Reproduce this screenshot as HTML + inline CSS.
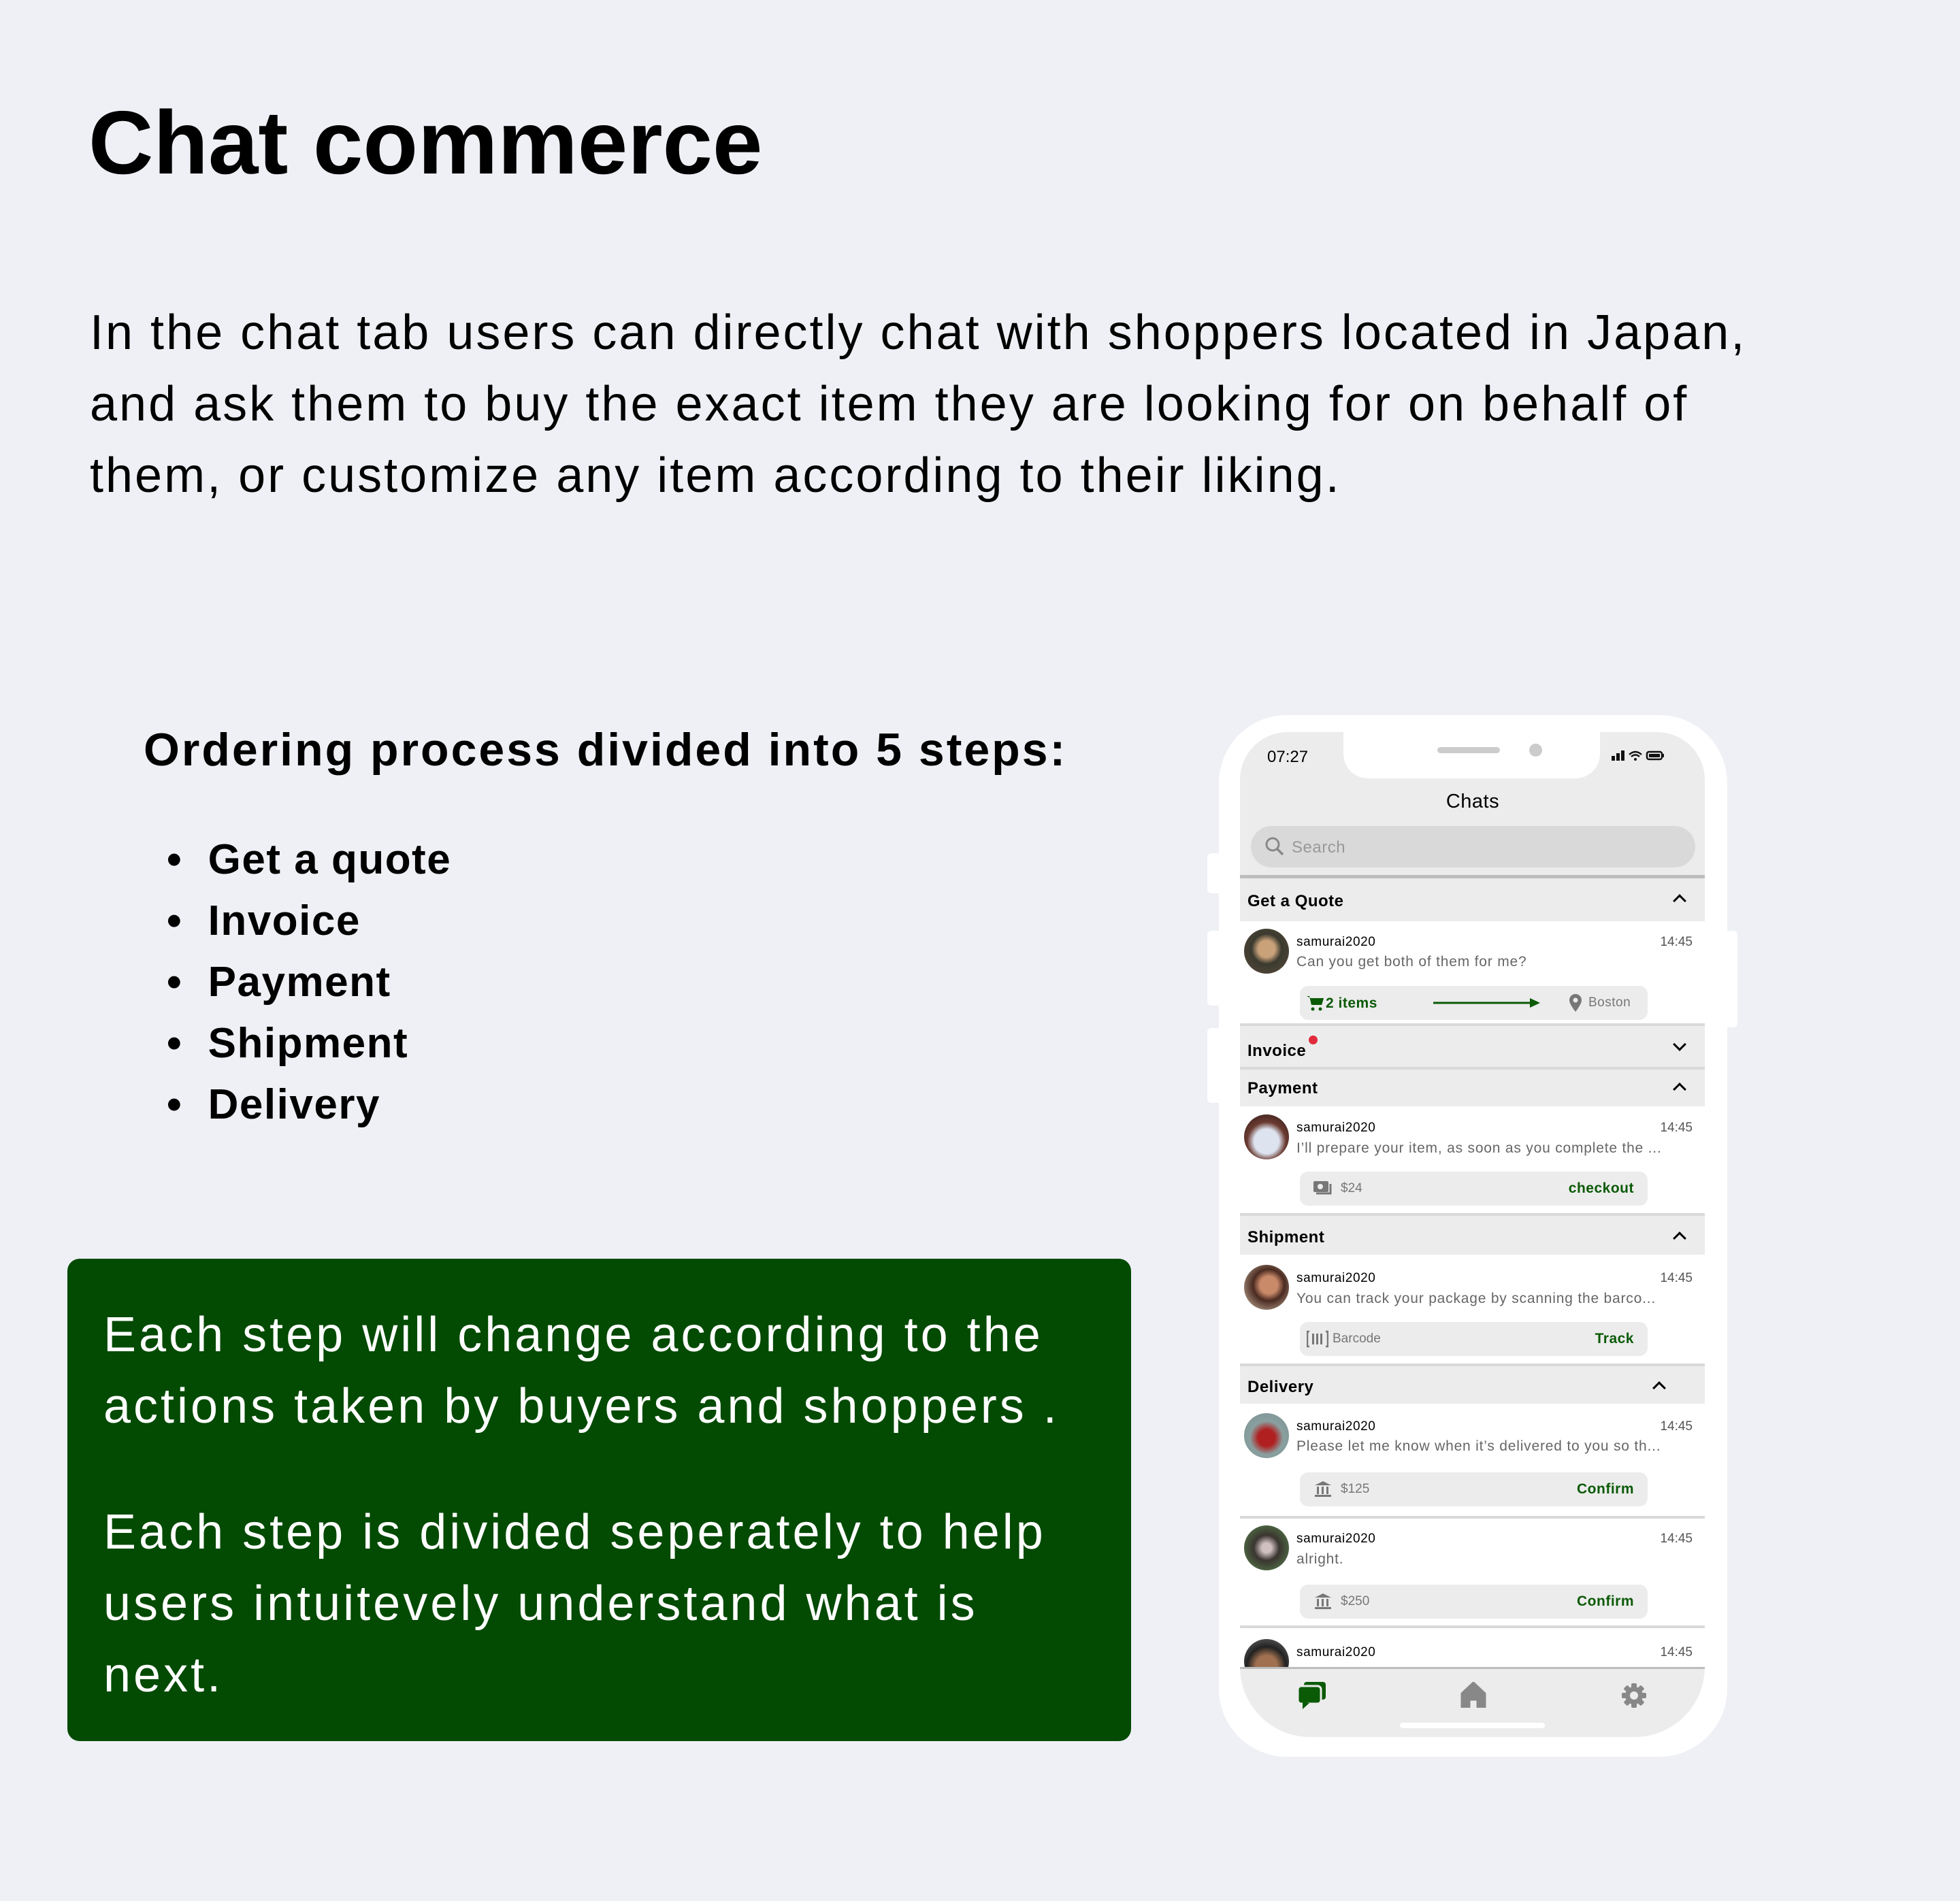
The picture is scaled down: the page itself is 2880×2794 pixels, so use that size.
<!DOCTYPE html>
<html><head><meta charset="utf-8">
<style>
*{margin:0;padding:0;box-sizing:border-box}
html,body{width:2880px;height:2794px;overflow:hidden}
body{background:#eef0f5;position:relative;font-family:"Liberation Sans",sans-serif;color:#000}
.a{position:absolute;white-space:nowrap}
.t{line-height:1}
.hdr{position:absolute;left:1822px;width:683px;background:#ececec;border-bottom:4px solid #d9d9d9}
.hdr span{position:absolute;left:11px;font-weight:bold;font-size:24px;line-height:1;letter-spacing:.5px}
.chev{position:absolute;right:30px;width:14px;height:14px;border-left:3px solid #000;border-top:3px solid #000}
.row{position:absolute;left:1822px;width:683px;background:#fff}
.av{position:absolute;width:66px;height:66px;border-radius:50%}
.nm{position:absolute;left:83px;font-size:19px;line-height:1;color:#000;letter-spacing:.6px}
.tm{position:absolute;right:18px;font-size:19px;line-height:1;color:#555}
.ms{position:absolute;left:83px;font-size:21px;line-height:1;color:#666;letter-spacing:.8px}
.pill{position:absolute;left:88px;width:511px;height:50px;background:#ececec;border-radius:12px}
.pill .l{position:absolute;left:60px;top:15px;font-size:19px;color:#777;line-height:1}
.pill .r{position:absolute;right:20px;top:14px;font-size:21px;font-weight:bold;color:#0a5a06;line-height:1;letter-spacing:.5px}
</style></head><body>

<div class="a t" style="left:130px;top:144px;font-size:132px;font-weight:bold;letter-spacing:0px">Chat commerce</div>

<div class="a t" style="left:132px;top:453px;font-size:72px;letter-spacing:3px">In the chat tab users can directly chat with shoppers located in Japan,</div>
<div class="a t" style="left:132px;top:558px;font-size:72px;letter-spacing:3px">and ask them to buy the exact item they are looking for on behalf of</div>
<div class="a t" style="left:132px;top:663px;font-size:72px;letter-spacing:3px">them, or customize any item according to their liking.</div>

<div class="a t" style="left:211px;top:1068px;font-size:68px;font-weight:bold;letter-spacing:3px">Ordering process divided into 5 steps:</div>

<div class="a t" style="left:245px;top:1219px;font-size:62px;font-weight:bold;line-height:90px;letter-spacing:1.5px">
<div>•&nbsp;&nbsp;Get a quote</div><div>•&nbsp;&nbsp;Invoice</div><div>•&nbsp;&nbsp;Payment</div><div>•&nbsp;&nbsp;Shipment</div><div>•&nbsp;&nbsp;Delivery</div>
</div>

<div class="a" style="left:99px;top:1850px;width:1563px;height:709px;background:#034a02;border-radius:18px"></div>
<div class="a t" style="left:152px;top:1910px;font-size:72px;color:#fff;line-height:105px;letter-spacing:4px">Each step will change according to the<br>actions taken by buyers and shoppers .</div>
<div class="a t" style="left:152px;top:2200px;font-size:72px;color:#fff;line-height:105px;letter-spacing:4px">Each step is divided seperately to help<br>users intuitevely understand what is<br>next.</div>

<div class="a" style="left:1774px;top:1254px;width:20px;height:59px;background:#fff;border-radius:6px"></div>
<div class="a" style="left:1774px;top:1368px;width:20px;height:110px;background:#fff;border-radius:6px"></div>
<div class="a" style="left:1774px;top:1511px;width:20px;height:110px;background:#fff;border-radius:6px"></div>
<div class="a" style="left:2535px;top:1368px;width:18px;height:142px;background:#fff;border-radius:6px"></div>
<div class="a" style="left:1791px;top:1051px;width:747px;height:1531px;background:#fff;border-radius:100px"></div>
<div class="a" style="left:1822px;top:1076px;width:683px;height:1477px;background:#ececec;border-radius:70px 70px 120px 120px;overflow:hidden"></div>
<div class="a" style="left:1974px;top:1070px;width:377px;height:74px;background:#fff;border-radius:0 0 36px 36px"></div>
<div class="a" style="left:2112px;top:1098px;width:92px;height:9px;background:#ccc;border-radius:5px"></div>
<div class="a" style="left:2247px;top:1093px;width:19px;height:19px;background:#ccc;border-radius:50%"></div>
<div class="a t" style="left:1862px;top:1101px;font-size:24px">07:27</div>
<svg class="a" style="left:2368px;top:1101px" width="80" height="20" viewBox="0 0 80 20">
<rect x="0" y="10" width="5" height="7" fill="#111"/><rect x="7" y="6" width="5" height="11" fill="#111"/><rect x="14" y="2" width="5" height="15" fill="#111"/>
<path d="M26 8 q9-8 18 0 M29 11 q6-5 12 0" stroke="#111" stroke-width="2.5" fill="none"/><circle cx="35" cy="15" r="2" fill="#111"/>
<rect x="52" y="4" width="22" height="11" rx="3" fill="none" stroke="#111" stroke-width="2.5"/><rect x="55" y="7" width="16" height="5" fill="#111"/><rect x="75" y="7" width="2" height="5" fill="#111"/>
</svg>
<div class="a t" style="left:2064px;top:1164px;width:200px;text-align:center;font-size:29px;letter-spacing:.5px">Chats</div>
<div class="a" style="left:1838px;top:1214px;width:653px;height:61px;background:#d9d9d9;border-radius:31px"></div>
<svg class="a" style="left:1857px;top:1228px" width="32" height="32" viewBox="0 0 32 32"><circle cx="13" cy="13" r="9" fill="none" stroke="#888" stroke-width="3"/><line x1="20" y1="20" x2="28" y2="28" stroke="#888" stroke-width="3.5"/></svg>
<div class="a t" style="left:1898px;top:1234px;font-size:24px;color:#999;letter-spacing:.5px">Search</div>
<div class="a" style="left:1822px;top:1286px;width:683px;height:5px;background:#bdbdbd"></div>

<div class="hdr" style="top:1291px;height:63px;border-bottom:none"><span style="top:22px">Get a Quote</span><div class="chev" style="top:26px;transform:rotate(45deg)"></div></div>
<div class="row" style="top:1354px;height:154px;border-bottom:4px solid #d9d9d9">
 <div class="av" style="left:6px;top:11px;background:radial-gradient(circle at 50% 45%,#c9a27a 0 25%,#3b3a2f 45%,#5a4a3a 100%)"></div>
 <div class="nm" style="top:21px">samurai2020</div><div class="tm" style="top:21px">14:45</div>
 <div class="ms" style="top:49px">Can you get both of them for me?</div>
 <div class="pill" style="top:95px">
  <svg style="position:absolute;left:10px;top:14px" width="26" height="24" viewBox="0 0 26 24"><path d="M0 1h4l3 13h15l3-10H6" fill="#0a5a06"/><path d="M5 4h20l-3 10H7z" fill="#0a5a06"/><circle cx="9" cy="20" r="2.5" fill="#0a5a06"/><circle cx="20" cy="20" r="2.5" fill="#0a5a06"/></svg>
  <div style="position:absolute;left:38px;top:15px;font-size:21px;font-weight:bold;color:#0a5a06;line-height:1;letter-spacing:.5px">2 items</div>
  <svg style="position:absolute;left:196px;top:17px" width="160" height="16" viewBox="0 0 160 16"><line x1="0" y1="8" x2="145" y2="8" stroke="#0a5a06" stroke-width="3"/><path d="M142 1l15 7-15 7z" fill="#0a5a06"/></svg>
  <svg style="position:absolute;left:396px;top:12px" width="18" height="26" viewBox="0 0 18 26"><path d="M9 0a9 9 0 0 1 9 9c0 6-9 17-9 17S0 15 0 9a9 9 0 0 1 9-9z" fill="#777"/><circle cx="9" cy="9" r="3.5" fill="#ececec"/></svg>
  <div style="position:absolute;left:424px;top:15px;font-size:19px;color:#777;line-height:1;letter-spacing:.5px">Boston</div>
 </div>
</div>
<div class="hdr" style="top:1512px;height:60px"><span style="top:21px">Invoice</span><div class="a" style="left:101px;top:10px;width:13px;height:13px;border-radius:50%;background:#e02b3c"></div><div class="chev" style="top:16px;transform:rotate(225deg)"></div></div>
<div class="hdr" style="top:1572px;height:54px;border-bottom:none"><span style="top:16px">Payment</span><div class="chev" style="top:22px;transform:rotate(45deg)"></div></div>
<div class="row" style="top:1626px;height:161px;border-bottom:4px solid #d9d9d9">
 <div class="av" style="left:6px;top:12px;background:radial-gradient(circle at 50% 60%,#dde4f0 0 35%,#6a3a30 55%,#2a1a18 100%)"></div>
 <div class="nm" style="top:22px">samurai2020</div><div class="tm" style="top:22px">14:45</div>
 <div class="ms" style="top:51px">I’ll prepare your item, as soon as you complete the ...</div>
 <div class="pill" style="top:96px">
  <svg style="position:absolute;left:20px;top:14px" width="28" height="22" viewBox="0 0 28 22"><rect x="0" y="0" width="22" height="16" rx="2" fill="#777"/><circle cx="10" cy="8" r="4" fill="#ececec"/><path d="M25 4v14H4" stroke="#777" stroke-width="3" fill="none"/></svg>
  <div class="l">$24</div><div class="r">checkout</div>
 </div>
</div>
<div class="hdr" style="top:1791px;height:53px;border-bottom:none"><span style="top:16px">Shipment</span><div class="chev" style="top:22px;transform:rotate(45deg)"></div></div>
<div class="row" style="top:1844px;height:164px;border-bottom:4px solid #d9d9d9">
 <div class="av" style="left:6px;top:15px;background:radial-gradient(circle at 55% 45%,#c98a6a 0 25%,#4a2a20 45%,#d8c8b0 100%)"></div>
 <div class="nm" style="top:25px">samurai2020</div><div class="tm" style="top:25px">14:45</div>
 <div class="ms" style="top:54px">You can track your package by scanning the barco...</div>
 <div class="pill" style="top:99px">
  <svg style="position:absolute;left:10px;top:12px" width="32" height="26" viewBox="0 0 32 26"><path d="M4 2H1v22h3M28 2h3v22h-3" stroke="#777" stroke-width="2.5" fill="none"/><rect x="8" y="5" width="3" height="16" fill="#777"/><rect x="14" y="5" width="3" height="16" fill="#777"/><rect x="20" y="5" width="3" height="16" fill="#777"/></svg>
  <div class="l" style="left:48px">Barcode</div><div class="r">Track</div>
 </div>
</div>
<div class="hdr" style="top:2012px;height:51px;border-bottom:none"><span style="top:15px">Delivery</span><div class="chev" style="top:21px;right:60px;transform:rotate(45deg)"></div></div>
<div class="row" style="top:2063px;height:169px;border-bottom:4px solid #d9d9d9">
 <div class="av" style="left:6px;top:14px;background:radial-gradient(circle at 50% 55%,#b02020 0 25%,#8aa0a0 50%,#7a9090 100%)"></div>
 <div class="nm" style="top:24px">samurai2020</div><div class="tm" style="top:24px">14:45</div>
 <div class="ms" style="top:52px">Please let me know when it’s delivered to you so th...</div>
 <div class="pill" style="top:101px">
  <svg style="position:absolute;left:22px;top:13px" width="24" height="24" viewBox="0 0 24 24"><path d="M12 0l12 6H0z" fill="#777"/><rect x="3" y="8" width="3" height="11" fill="#777"/><rect x="10" y="8" width="3" height="11" fill="#777"/><rect x="17" y="8" width="3" height="11" fill="#777"/><rect x="0" y="20" width="24" height="3" fill="#777"/></svg>
  <div class="l">$125</div><div class="r">Confirm</div>
 </div>
</div>
<div class="row" style="top:2232px;height:161px;border-bottom:4px solid #d9d9d9">
 <div class="av" style="left:6px;top:10px;background:radial-gradient(circle at 50% 50%,#d0c0c0 0 15%,#3a3530 40%,#5a8a50 100%)"></div>
 <div class="nm" style="top:20px">samurai2020</div><div class="tm" style="top:20px">14:45</div>
 <div class="ms" style="top:49px">alright.</div>
 <div class="pill" style="top:97px">
  <svg style="position:absolute;left:22px;top:13px" width="24" height="24" viewBox="0 0 24 24"><path d="M12 0l12 6H0z" fill="#777"/><rect x="3" y="8" width="3" height="11" fill="#777"/><rect x="10" y="8" width="3" height="11" fill="#777"/><rect x="17" y="8" width="3" height="11" fill="#777"/><rect x="0" y="20" width="24" height="3" fill="#777"/></svg>
  <div class="l">$250</div><div class="r">Confirm</div>
 </div>
</div>
<div class="row" style="top:2393px;height:59px;overflow:hidden">
 <div class="av" style="left:6px;top:16px;background:radial-gradient(circle at 50% 60%,#a07050 0 30%,#222 55%,#777 100%)"></div>
 <div class="nm" style="top:26px">samurai2020</div><div class="tm" style="top:26px">14:45</div>
</div>
<div class="a" style="left:1822px;top:2450px;width:683px;height:103px;background:#ececec;border-top:3px solid #bdbdbd;border-radius:0 0 120px 120px"></div>
<svg class="a" style="left:1906px;top:2472px" width="44" height="42" viewBox="0 0 44 42"><rect x="10" y="0" width="32" height="26" rx="4" fill="#0a5a06"/><rect x="1" y="6" width="34" height="26" rx="5" fill="#0a5a06" stroke="#ececec" stroke-width="3"/><path d="M8 30l0 10 10-9z" fill="#0a5a06"/></svg>
<svg class="a" style="left:2146px;top:2472px" width="38" height="38" viewBox="0 0 38 38"><path d="M19 1L2 17v20h11V26h12v11h11V17z" fill="#888" stroke="#888" stroke-linejoin="round" stroke-width="3"/></svg>
<svg class="a" style="left:2382px;top:2473px" width="38" height="38" viewBox="0 0 38 38"><g fill="#888"><circle cx="19" cy="19" r="13"/><rect x="15" y="1" width="8" height="36" rx="2"/><rect x="15" y="1" width="8" height="36" rx="2" transform="rotate(45 19 19)"/><rect x="15" y="1" width="8" height="36" rx="2" transform="rotate(90 19 19)"/><rect x="15" y="1" width="8" height="36" rx="2" transform="rotate(135 19 19)"/></g><circle cx="19" cy="19" r="6" fill="#ececec"/></svg>
<div class="a" style="left:2057px;top:2532px;width:213px;height:8px;background:#fff;border-radius:4px"></div>
</body></html>
